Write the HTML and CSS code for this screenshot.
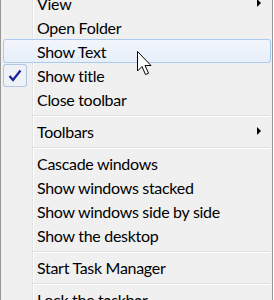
FILE: index.html
```html
<!DOCTYPE html>
<html lang="en">
<head>
  <meta charset="UTF-8" />
  <title>Taskbar menu</title>
  <link rel="stylesheet" href="styles.css">
</head>
<body>
  <div class="menu">
    <div class="item"><span class="mark"></span><span class="label">View</span><span class="arrow"></span></div>
    <div class="item"><span class="mark"></span><span class="label">Open Folder</span></div>
    <div class="item hover"><span class="mark"></span><span class="label">Show Text</span></div>
    <div class="item"><span class="mark checked"><svg width="14" height="13" viewBox="0 0 14 13"><path d="M1.5 7 L5 11 L12.5 1.5" fill="none" stroke="#1b1f9c" stroke-width="2.2"/></svg></span><span class="label">Show title</span></div>
    <div class="item"><span class="mark"></span><span class="label">Close toolbar</span></div>
    <div class="sep"></div>
    <div class="item"><span class="mark"></span><span class="label">Toolbars</span><span class="arrow"></span></div>
    <div class="sep"></div>
    <div class="item"><span class="mark"></span><span class="label">Cascade windows</span></div>
    <div class="item"><span class="mark"></span><span class="label">Show windows stacked</span></div>
    <div class="item"><span class="mark"></span><span class="label">Show windows side by side</span></div>
    <div class="item"><span class="mark"></span><span class="label">Show the desktop</span></div>
    <div class="sep"></div>
    <div class="item"><span class="mark"></span><span class="label">Start Task Manager</span></div>
    <div class="sep"></div>
    <div class="item"><span class="mark"></span><span class="label">Lock the taskbar</span></div>
  </div>

  <!-- mouse pointer over "Show Text" -->
  <svg class="pointer" width="17" height="26" viewBox="0 0 17 26">
    <path d="M0.5 0.5 L0.5 20 L5 15.5 L8.5 23.5 L11.5 22.2 L8 14.5 L14 14.5 Z" fill="#fff" stroke="#000" stroke-width="1"/>
  </svg>
</body>
</html>
```

FILE: styles.css
```css
*{box-sizing:border-box}
body{margin:0;background:#fff;overflow:hidden;font-family:Lato,"Open Sans",sans-serif;font-size:16px;letter-spacing:-0.3px;color:#000}

.menu{width:273px;height:330px;margin-top:-9px;border-left:1px solid #979797;border-right:1px solid #979797;
  background:linear-gradient(to right,transparent 31px,#e2e3e3 31px,#e2e3e3 32px,#fff 32px,#fff 33px,transparent 33px),#f0f0f0}

.item{height:24px;margin:0 1px 0 2px;display:flex;align-items:center;border-radius:3px}
.item.hover{background:linear-gradient(#f3f7fc,#e6eef9);box-shadow:inset 0 0 0 1px #abcaf0}
.mark{width:24px;height:23px;flex:none;display:flex;align-items:center;justify-content:center;border-radius:3px}
.mark.checked{background:#eef1f6;box-shadow:inset 0 0 0 1px #b3c6e0}
.label{margin-left:10px;white-space:nowrap}
.arrow{margin-left:auto;margin-right:10px;width:0;height:0;border-left:4px solid #000;border-top:4px solid transparent;border-bottom:4px solid transparent}

.sep{height:8px;margin:0 2px 0 32px;background:linear-gradient(transparent 4px,#e0e0e0 4px,#e0e0e0 5px,#fff 5px,#fff 6px,transparent 6px)}

.pointer{position:absolute;left:137px;top:51px}
```
